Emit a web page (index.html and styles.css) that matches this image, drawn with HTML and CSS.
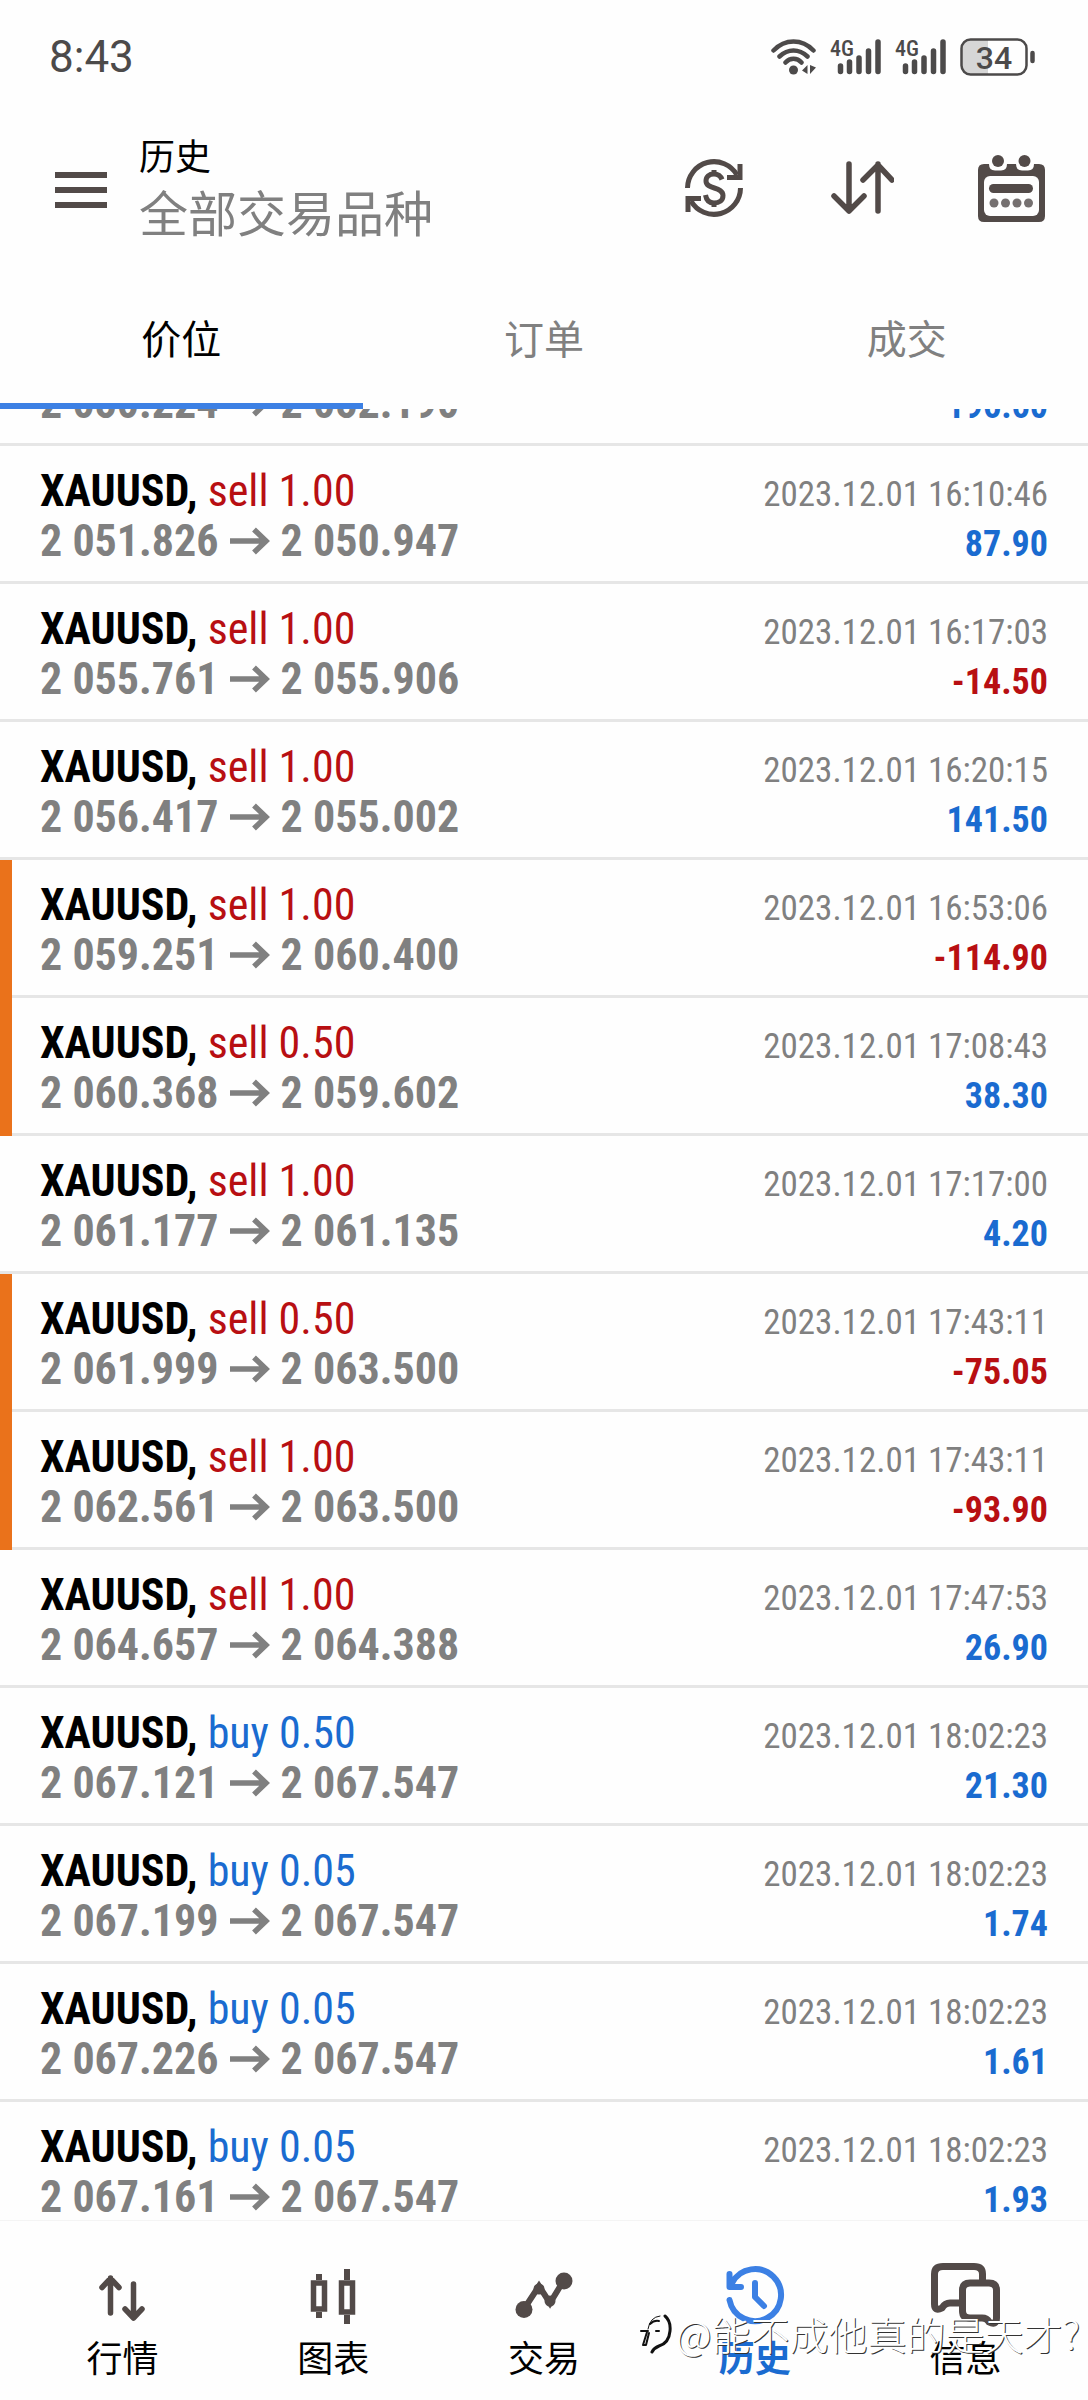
FILE: index.html
```html
<!DOCTYPE html>
<html lang="zh-CN">
<head>
<meta charset="utf-8">
<meta name="viewport" content="width=device-width, initial-scale=1">
<title>历史</title>
<link rel="stylesheet" href="styles.css">
</head>
<body>
<svg class="defs" aria-hidden="true">
  <symbol id="arrow" viewBox="0 0 40 28"><path d="M0 14H36M24 2.500L36 14L24 25.500" fill="none" stroke="currentColor" stroke-width="5.500"/></symbol>
  <symbol id="bars" viewBox="0 0 51 36">
    <path d="M10.500 27V32.500M19.500 23V32.500M29 19V32.500M38.500 12V32.500M48 3V32.500" fill="none" stroke="currentColor" stroke-width="5.500" stroke-linecap="round"/>
  </symbol>
</svg>

<div class="status">
  <time>8:43</time>
  <div class="status-icons">
    <svg class="wifi" viewBox="0 0 45 36" fill="none" stroke="currentColor" stroke-width="4.500" stroke-linecap="round">
      <path d="M2.500 11.500C14-.5 31-.5 42.500 11.500M8.500 17.500C17 9.500 28 9.500 36.500 17.500M14.500 23.500C19 18.500 26 18.500 30.500 23.500"/>
      <circle cx="22.500" cy="31" r="4.500" fill="currentColor" stroke="none"/>
      <path d="M36.500 26V35L31 31.500ZM39 26V35L45 28.500Z" fill="currentColor" stroke="none"/>
    </svg>
    <svg class="signal" viewBox="0 0 51 36"><use href="#bars"/><text x="0" y="17" class="net">4G</text></svg>
    <svg class="signal" viewBox="0 0 51 36"><use href="#bars"/><text x="0" y="17" class="net">4G</text></svg>
    <svg class="battery" viewBox="0 0 76 38">
      <path d="M10 2H28V36H10Q2 36 2 28V10Q2 2 10 2Z" fill="#d6d6d6"/>
      <rect x="1.500" y="1.500" width="65" height="35" rx="9" fill="none" stroke="currentColor" stroke-width="2.500"/>
      <path d="M72.500 15V23" stroke="currentColor" stroke-width="4.500" stroke-linecap="round"/>
      <text x="34" y="31" text-anchor="middle" class="charge">34</text>
    </svg>
  </div>
</div>

<header class="appbar">
  <button class="icon-btn menu" aria-label="菜单"><svg width="52" height="36" viewBox="0 0 52 36"><path d="M0 3H52M0 18H52M0 33H52" stroke="currentColor" stroke-width="6"/></svg></button>
  <div class="titles">
    <h1>历史</h1>
    <p>全部交易品种</p>
  </div>
  <div class="actions">
    <button class="icon-btn" aria-label="货币"><svg width="58" height="58" viewBox="0 0 58 58" fill="none" stroke="currentColor" stroke-width="5">
      <path d="M2.500 29A26.500 26.500 0 0 1 52 16M55.500 29A26.500 26.500 0 0 1 6 42"/>
      <path d="M55 5V18.500H42M3 53V39.500H16"/>
      <path d="M29 11V16M29 43V48"/>
      <path d="M37 20.500C35.500 16.500 33 15 29 15C24 15 21 17.500 21 22C21 31 38 27 38 36.500C38 41.500 34.500 44 29 44C24.500 44 21.500 42 20.500 36"/>
    </svg></button>
    <button class="icon-btn" aria-label="排序"><svg width="67" height="54" viewBox="-4 0 67 54" fill="none" stroke="currentColor" stroke-width="5.500" stroke-linecap="round" stroke-linejoin="round">
      <path d="M18 3V50M3 35L18 50L33 35M47 50V3M32 19L47 4L61 19"/>
    </svg></button>
    <button class="icon-btn" aria-label="日期"><svg width="67" height="67" viewBox="0 0 67 67">
      <path d="M6 9H61Q67 9 67 15V61Q67 67 61 67H6Q0 67 0 61V15Q0 9 6 9Z" fill="currentColor"/>
      <path d="M11 7H29V9Q29 15.500 23 15.500H17Q11 15.500 11 9ZM38 7H56V9Q56 15.500 50 15.500H44Q38 15.500 38 9Z" fill="#fefefe"/>
      <circle cx="20" cy="6" r="6" fill="currentColor"/><circle cx="46.500" cy="6" r="6" fill="currentColor"/>
      <rect x="6" y="21" width="55" height="40" rx="6" fill="#fefefe"/>
      <rect x="11" y="29" width="44" height="9" rx="4.500" fill="currentColor"/>
      <g fill="#757070"><circle cx="16" cy="48" r="4.500"/><circle cx="27.500" cy="48" r="4.500"/><circle cx="39" cy="48" r="4.500"/><circle cx="50.500" cy="48" r="4.500"/></g>
    </svg></button>
  </div>
</header>

<nav class="tabs">
  <button class="tab active">价位</button>
  <button class="tab">订单</button>
  <button class="tab">成交</button>
</nav>

<main class="history">
<ul class="deals">
  <li class="deal"><p class="name"><b>XAUUSD,</b> <span class="buy">buy 1.00</span></p><time>2023.12.01 16:05:12</time><p class="prices">2 050.224<svg><use href="#arrow"/></svg>2 052.190</p><p class="profit">196.60</p></li>
  <li class="deal"><p class="name"><b>XAUUSD,</b> <span class="sell">sell 1.00</span></p><time>2023.12.01 16:10:46</time><p class="prices">2 051.826<svg><use href="#arrow"/></svg>2 050.947</p><p class="profit">87.90</p></li>
  <li class="deal"><p class="name"><b>XAUUSD,</b> <span class="sell">sell 1.00</span></p><time>2023.12.01 16:17:03</time><p class="prices">2 055.761<svg><use href="#arrow"/></svg>2 055.906</p><p class="profit loss">-14.50</p></li>
  <li class="deal"><p class="name"><b>XAUUSD,</b> <span class="sell">sell 1.00</span></p><time>2023.12.01 16:20:15</time><p class="prices">2 056.417<svg><use href="#arrow"/></svg>2 055.002</p><p class="profit">141.50</p></li>
  <li class="deal marked"><p class="name"><b>XAUUSD,</b> <span class="sell">sell 1.00</span></p><time>2023.12.01 16:53:06</time><p class="prices">2 059.251<svg><use href="#arrow"/></svg>2 060.400</p><p class="profit loss">-114.90</p></li>
  <li class="deal marked"><p class="name"><b>XAUUSD,</b> <span class="sell">sell 0.50</span></p><time>2023.12.01 17:08:43</time><p class="prices">2 060.368<svg><use href="#arrow"/></svg>2 059.602</p><p class="profit">38.30</p></li>
  <li class="deal"><p class="name"><b>XAUUSD,</b> <span class="sell">sell 1.00</span></p><time>2023.12.01 17:17:00</time><p class="prices">2 061.177<svg><use href="#arrow"/></svg>2 061.135</p><p class="profit">4.20</p></li>
  <li class="deal marked"><p class="name"><b>XAUUSD,</b> <span class="sell">sell 0.50</span></p><time>2023.12.01 17:43:11</time><p class="prices">2 061.999<svg><use href="#arrow"/></svg>2 063.500</p><p class="profit loss">-75.05</p></li>
  <li class="deal marked"><p class="name"><b>XAUUSD,</b> <span class="sell">sell 1.00</span></p><time>2023.12.01 17:43:11</time><p class="prices">2 062.561<svg><use href="#arrow"/></svg>2 063.500</p><p class="profit loss">-93.90</p></li>
  <li class="deal"><p class="name"><b>XAUUSD,</b> <span class="sell">sell 1.00</span></p><time>2023.12.01 17:47:53</time><p class="prices">2 064.657<svg><use href="#arrow"/></svg>2 064.388</p><p class="profit">26.90</p></li>
  <li class="deal"><p class="name"><b>XAUUSD,</b> <span class="buy">buy 0.50</span></p><time>2023.12.01 18:02:23</time><p class="prices">2 067.121<svg><use href="#arrow"/></svg>2 067.547</p><p class="profit">21.30</p></li>
  <li class="deal"><p class="name"><b>XAUUSD,</b> <span class="buy">buy 0.05</span></p><time>2023.12.01 18:02:23</time><p class="prices">2 067.199<svg><use href="#arrow"/></svg>2 067.547</p><p class="profit">1.74</p></li>
  <li class="deal"><p class="name"><b>XAUUSD,</b> <span class="buy">buy 0.05</span></p><time>2023.12.01 18:02:23</time><p class="prices">2 067.226<svg><use href="#arrow"/></svg>2 067.547</p><p class="profit">1.61</p></li>
  <li class="deal"><p class="name"><b>XAUUSD,</b> <span class="buy">buy 0.05</span></p><time>2023.12.01 18:02:23</time><p class="prices">2 067.161<svg><use href="#arrow"/></svg>2 067.547</p><p class="profit">1.93</p></li>
</ul>
</main>

<nav class="bottom">
  <a class="item" href="#quotes"><svg width="46" height="64" viewBox="0 0 46 64" fill="none" stroke="currentColor" stroke-width="5.500" stroke-linecap="round" stroke-linejoin="round"><path d="M11.500 50V15M3 24.500L11.500 15.500L20 24.500M34.500 21V55M26 46L34.500 55L43 46"/></svg>行情</a>
  <a class="item" href="#charts"><svg width="46" height="64" viewBox="0 0 46 64" fill="none" stroke="currentColor" stroke-width="6"><path d="M9 11V17M9 49V55M37 6V17M37 52V61"/><path d="M3.500 20H14.500V46H3.500ZM31.500 20H42.500V49H31.500Z" stroke-width="5.500"/></svg>图表</a>
  <a class="item" href="#trade"><svg width="58" height="64" viewBox="0 0 58 64"><path d="M9 46L24 23L35 40L49 17" fill="none" stroke="currentColor" stroke-width="6"/><g fill="currentColor"><circle cx="9" cy="46.500" r="8.500"/><circle cx="24" cy="26" r="5.500"/><circle cx="35" cy="38" r="5.500"/><circle cx="49" cy="18" r="8.500"/></g></svg>交易</a>
  <a class="item active" href="#history"><svg width="60" height="64" viewBox="0 0 60 64" fill="none" stroke="currentColor" stroke-width="6" stroke-linecap="round" stroke-linejoin="round"><path d="M4.500 37A26 26 0 1 0 7 20M4.500 11V24H16M30 20V34L39 43"/></svg>历史</a>
  <a class="item" href="#messages"><svg width="70" height="64" viewBox="0 1 70 64" fill="none" stroke="currentColor" stroke-width="7" stroke-linejoin="round"><path d="M51.500 18V12Q51.500 4.500 43 4.500H12Q3.500 4.500 3.500 12V42Q3.500 50 11 46Q14 41 19 41H29"/><path d="M39 21H58Q65.500 21 65.500 28V56Q65.500 64 58 60Q56 56 51 56H39Q31.500 56 31.500 49V28Q31.500 21 39 21Z"/></svg>信息</a>
  <div class="watermark"><svg width="32" height="42" viewBox="0 0 32 42" fill="none" stroke="#111" stroke-linecap="round" stroke-linejoin="round">
    <path d="M25 4Q31 9 30 19Q29 31 19 34Q14 36 12 40" stroke-width="3"/>
    <path d="M8 17Q10 5 20 4" stroke-width="1"/>
    <path d="M1 19H8M7 20L3 33H6L9 21M10 12Q14 8 19 9M16 19H19" stroke-width="2"/>
  </svg>@能不成他真的是天才?</div>
</nav>
</body>
</html>
```

FILE: styles.css
```css
* { box-sizing: border-box; }

body {
  margin: 0;
  height: 100vh;
  display: flex;
  flex-direction: column;
  background: #fefefe;
  color: #000;
  font-family: Roboto, "Noto Sans CJK SC", sans-serif;
}

h1, p, ul { margin: 0; padding: 0; font-weight: 400; }
ul { list-style: none; }
svg { display: block; flex: none; }
button { border: 0; padding: 0; background: none; font: inherit; color: inherit; }
.defs { position: absolute; width: 0; height: 0; }

.status {
  display: flex;
  justify-content: space-between;
  align-items: center;
  padding: 31px 52px 29px 49px;
  line-height: 52px;
  font-size: 44px;
  color: #4c4a4a;
}
.status-icons { display: flex; align-items: center; gap: 14px; }
.wifi { width: 45px; height: 36px; }
.signal { width: 51px; height: 36px; }
.battery { width: 76px; height: 38px; }
.net { font: 500 22px "Roboto Condensed", Roboto, sans-serif; fill: currentColor; }
.charge { font: 500 32px Roboto, sans-serif; fill: currentColor; }

.appbar {
  display: flex;
  align-items: center;
  gap: 32px;
  padding: 20px 43px 20px 55px;
}
.icon-btn { color: #524a48; }
.titles { flex: 1; }
.titles h1 { font-size: 36px; line-height: 52px; }
.titles p { font-size: 49px; line-height: 64px; color: #808080; }
.actions { display: flex; align-items: center; gap: 84px; padding-bottom: 4px; }

.tabs { display: flex; }
.tab {
  flex: 1;
  padding: 40px 0 29px;
  border-bottom: 6px solid transparent;
  font-size: 40px;
  line-height: 66px;
  color: #808080;
}
.tab.active { color: #000; border-color: #3c80e4; }

.history { flex: 1; min-height: 0; overflow: hidden; }
/* the list is scrolled part of the way past its first deal */
.deals { margin-top: -101px; }
.deal {
  position: relative;
  display: grid;
  grid-template-columns: 1fr auto;
  align-items: baseline;
  padding: 20px 40px 15px;
  border-bottom: 3px solid #e6e6e6;
  font-family: "Roboto Condensed", Roboto, sans-serif;
  font-size: 44px;
  line-height: 50px;
}
.marked::before {
  content: "";
  position: absolute;
  inset: 0 auto -3px 0;
  width: 12px;
  background: #ea721b;
}
.deal time { font-size: 35px; line-height: 40px; color: #808080; text-align: right; }
.prices { display: flex; align-items: center; gap: 11px; font-weight: 700; color: #808080; }
.prices svg { width: 40px; height: 28px; }
.profit { font-size: 36px; line-height: 40px; font-weight: 700; text-align: right; color: #1a6bd0; }
.buy { color: #1a6bd0; }
.sell { color: #b80f12; }
.profit.loss { color: #b80f12; }

.bottom {
  position: relative;
  display: flex;
  padding: 42px 17px 16px;
  border-top: 1px solid #f4f4f4;
}
.item {
  flex: 1;
  display: flex;
  flex-direction: column;
  align-items: center;
  gap: 9px;
  font-size: 36px;
  line-height: 48px;
  color: #000;
  text-decoration: none;
}
.item svg { color: #524a48; }
.item.active { color: #1a6bd0; font-weight: 700; }
.item.active svg { color: #3c80e4; }

.watermark {
  position: absolute;
  right: 8px;
  bottom: 39px;
  display: flex;
  align-items: center;
  gap: 4px;
  font-family: "Noto Sans CJK SC", sans-serif;
  font-weight: 300;
  font-size: 39px;
  line-height: 56px;
  color: #fff;
  text-shadow: 1px 1px 0 #333;
  white-space: nowrap;
}
```
